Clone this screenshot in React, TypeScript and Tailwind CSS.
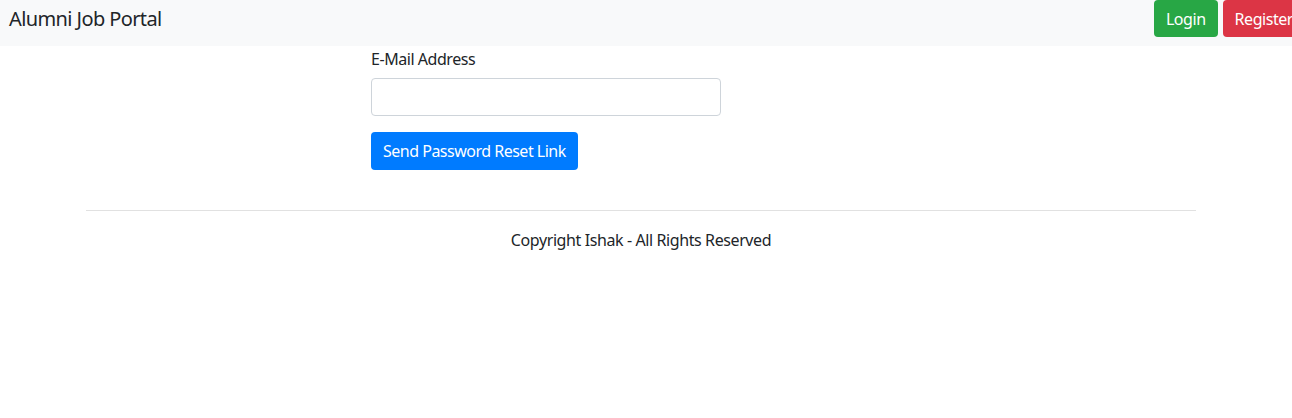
import React from 'react';

const App = () => {
  return (
    <div className="min-h-[418px] w-[1292px] overflow-hidden bg-white text-[#212529] font-['Noto_Sans',sans-serif] tracking-[-0.45px]">
      <nav className="flex h-[46px] w-[1305px] items-start bg-[#f8f9fa]">
        <a className="ml-[9px] mt-[4px] text-[20px] leading-[30px] tracking-[-0.6px] text-[#212529]">Alumni Job Portal</a>
        <div className="ml-auto flex gap-[5px]">
          <button className="h-[37px] rounded-[4px] bg-[#28a745] px-[12px] text-[16px] text-white">Login</button>
          <button className="h-[37px] rounded-[4px] bg-[#dc3545] px-[12px] text-[16px] text-white">Register</button>
        </div>
      </nav>

      <div className="ml-[86px] w-[1110px]">
        <form className="ml-[285px] pt-[1px]" onSubmit={(e) => e.preventDefault()}>
          <label className="block text-[16px] leading-[24px]">E-Mail Address</label>
          <input
            type="email"
            className="mt-[7px] block h-[38px] w-[350px] rounded-[4px] border border-[#ced4da] px-3 outline-none"
          />
          <button className="mt-[16px] h-[38px] rounded-[4px] bg-[#007bff] px-[12px] text-[16px] tracking-[-0.5px] text-white">
            Send Password Reset Link
          </button>
        </form>

        <hr className="mt-[40px] border-t border-[#e1e1e1]" />
        <p className="mt-[17px] text-center text-[16px] leading-[24px] tracking-[-0.4px]">Copyright Ishak - All Rights Reserved</p>
      </div>
    </div>
  );
};

export default App;
